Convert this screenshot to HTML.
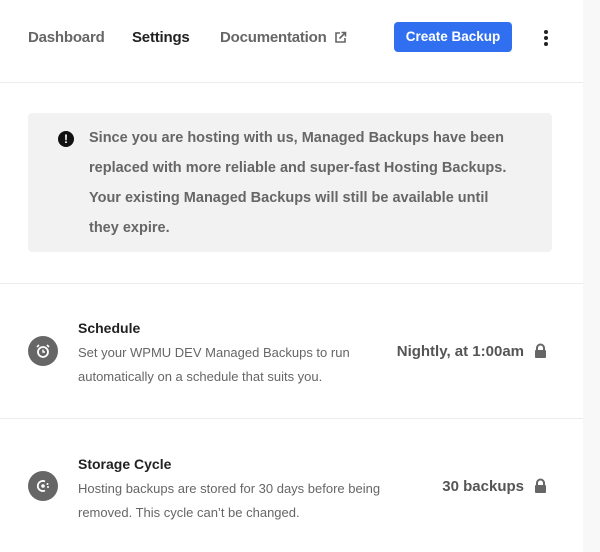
<!DOCTYPE html>
<html><head><meta charset="utf-8"><style>
body{margin:0;width:600px;height:552px;overflow:hidden;background:#fff;font-family:"Liberation Sans",sans-serif;position:relative}
.sb{position:absolute;left:583px;top:0;width:17px;height:552px;background:#f8f8f8}
.hr{position:absolute;left:0;width:583px;height:1px;background:#ececec}
.nav{position:absolute;top:29px;font-size:15px;font-weight:bold;color:#666;letter-spacing:-0.2px}
.btn{position:absolute;left:394px;top:22px;width:118px;height:30px;background:#2f6ff0;border-radius:4px;color:#fff;font-size:13.5px;font-weight:bold;text-align:center;line-height:30px}
.note{position:absolute;left:28px;top:113px;width:524px;height:139px;background:#f2f2f2;border-radius:4px}
.note p{position:absolute;left:61px;top:10px;margin:0;width:460px;font-size:14.5px;line-height:30px;font-weight:bold;color:#666;white-space:nowrap}
.ic{position:absolute;width:30px;height:30px;border-radius:50%;background:#666}
.t{position:absolute;left:78px;font-size:14px;font-weight:bold;color:#222}
.d{position:absolute;left:78px;font-size:13px;line-height:24px;color:#666;width:330px}
.v{position:absolute;font-size:15px;font-weight:bold;color:#555}
</style></head><body>
<div class="sb"></div>
<div class="nav" style="left:28px">Dashboard</div>
<div class="nav" style="left:132px;color:#222">Settings</div>
<div class="nav" style="left:220px">Documentation</div>
<svg style="position:absolute;left:334px;top:31px" width="13" height="13" viewBox="0 0 13 13"><path d="M6 2H2v9h9V7" fill="none" stroke="#666" stroke-width="1.6"/><path d="M7.5 1.5h4v4M11.5 1.5 5.5 7.5" fill="none" stroke="#666" stroke-width="1.6"/></svg>
<div class="btn">Create Backup</div>
<div style="position:absolute;left:544px;top:30px;width:4px;height:4px;border-radius:2px;background:#222;box-shadow:0 6px 0 #222,0 12px 0 #222"></div>
<div class="hr" style="top:82px"></div>
<div class="note">
<div style="position:absolute;left:30px;top:18px;width:16px;height:16px;border-radius:50%;background:#111;color:#fff;font-size:12px;font-weight:bold;text-align:center;line-height:16px">!</div>
<p>Since you are hosting with us, Managed Backups have been<br>replaced with more reliable and super-fast Hosting Backups.<br>Your existing Managed Backups will still be available until<br>they expire.</p>
</div>
<div class="hr" style="top:283px"></div>
<div class="ic" style="left:28px;top:336px"><svg width="30" height="30" viewBox="0 0 30 30"><circle cx="15" cy="16" r="5" fill="none" stroke="#fff" stroke-width="1.8"/><path d="M15 13.5V16h2" stroke="#fff" stroke-width="1.4" fill="none"/><path d="M9 11l2-2M21 11l-2-2" stroke="#fff" stroke-width="1.6"/></svg></div>
<div class="t" style="top:320px">Schedule</div>
<div class="d" style="top:341px">Set your WPMU DEV Managed Backups to run automatically on a schedule that suits you.</div>
<div class="v" style="right:76px;top:343px">Nightly, at 1:00am</div>
<svg style="position:absolute;left:534px;top:343px" width="13" height="16" viewBox="0 0 13 16"><path d="M3 7V5a3.5 3.5 0 0 1 7 0v2" fill="none" stroke="#666" stroke-width="2"/><rect x="1" y="7" width="11" height="8" rx="1" fill="#666"/></svg>
<div class="hr" style="top:418px"></div>
<div class="ic" style="left:28px;top:471px"><svg width="30" height="30" viewBox="0 0 30 30"><path d="M17 10.5A5 5 0 1 0 17 19.5" fill="none" stroke="#fff" stroke-width="1.8"/><circle cx="15" cy="15" r="1.8" fill="#fff"/><circle cx="19.5" cy="13" r="1" fill="#fff"/><circle cx="20" cy="16" r="1" fill="#fff"/></svg></div>
<div class="t" style="top:456px">Storage Cycle</div>
<div class="d" style="top:477px">Hosting backups are stored for 30 days before being removed. This cycle can’t be changed.</div>
<div class="v" style="right:76px;top:478px">30 backups</div>
<svg style="position:absolute;left:534px;top:478px" width="13" height="16" viewBox="0 0 13 16"><path d="M3 7V5a3.5 3.5 0 0 1 7 0v2" fill="none" stroke="#666" stroke-width="2"/><rect x="1" y="7" width="11" height="8" rx="1" fill="#666"/></svg>
</body></html>
